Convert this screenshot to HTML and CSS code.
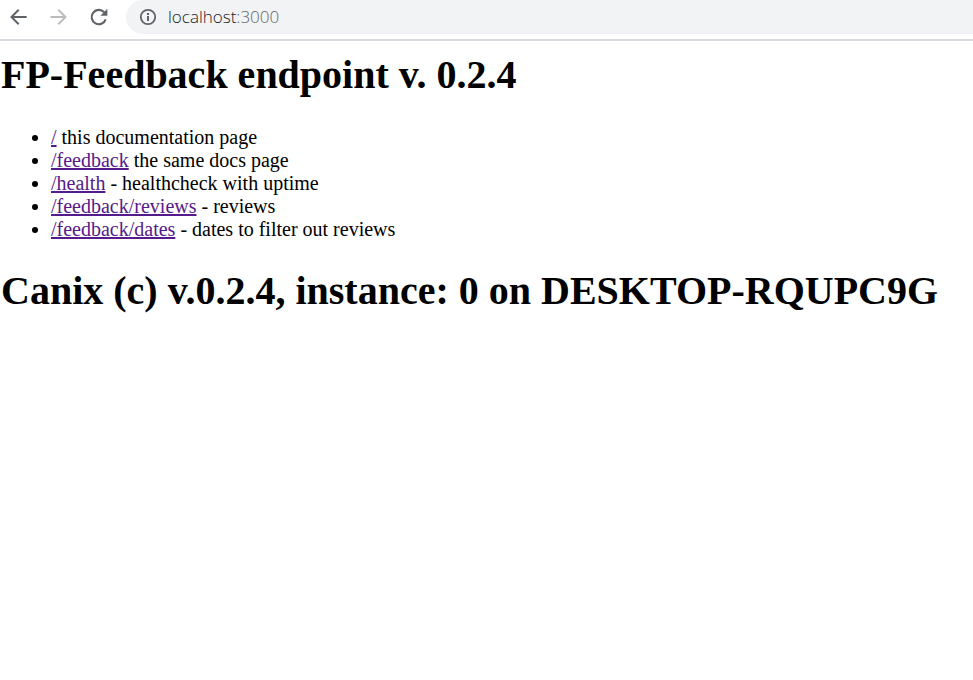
FILE: index.html
```
<!DOCTYPE html>
<html lang="en">
<head>
<meta charset="utf-8">
<title>FP-Feedback endpoint</title>
<link rel="stylesheet" href="styles.css">
</head>
<body>
<header class="toolbar">
  <nav class="tools">
    <button class="tool" type="button" aria-label="Back">
      <svg width="20" height="20" viewBox="0 0 20 20"><path d="M17.7 10H3.2M9.7 2.8L2.5 10L9.7 17.2" fill="none" stroke="#5f6368" stroke-width="2"/></svg>
    </button>
    <button class="tool" type="button" aria-label="Forward">
      <svg width="20" height="20" viewBox="0 0 20 20"><path d="M1.5 10H16.3M9.3 2.8L16.5 10L9.3 17.2" fill="none" stroke="#babcbe" stroke-width="2"/></svg>
    </button>
    <button class="tool" type="button" aria-label="Reload">
      <svg width="20" height="20" viewBox="0 0 20 20"><path d="M15.2 5.2A7.2 7.2 0 1 0 16.7 12.4" fill="none" stroke="#5f6368" stroke-width="2.1"/><path d="M18.4 1.8V8.8H11.4Z" fill="#5f6368"/></svg>
    </button>
  </nav>
  <div class="address">
    <svg width="18" height="18" viewBox="0 0 18 18"><circle cx="9" cy="9" r="7.2" fill="none" stroke="#5f6368" stroke-width="1.8"/><path d="M9 8V13M9 5V7" fill="none" stroke="#5f6368" stroke-width="2"/></svg>
    <span class="url">localhost<span class="port">:3000</span></span>
  </div>
</header>
<main class="page">
  <h1>FP-Feedback endpoint v. 0.2.4</h1>
  <ul>
    <li><a href="#">/</a> this documentation page</li>
    <li><a href="#">/feedback</a> the same docs page</li>
    <li><a href="#">/health</a> - healthcheck with uptime</li>
    <li><a href="#">/feedback/reviews</a> - reviews</li>
    <li><a href="#">/feedback/dates</a> - dates to filter out reviews</li>
  </ul>
  <h1>Canix (c) v.0.2.4, instance: 0 on DESKTOP-RQUPC9G</h1>
</main>
</body>
</html>
```
FILE: styles.css
```
body {
  margin: 0;
  background: #fff;
  color: #000;
  font: 20px/23px "Liberation Serif", "Times New Roman", serif;
}

.toolbar {
  display: flex;
  align-items: flex-start;
  padding-bottom: 5px;
  border-bottom: 2px solid #dadbe1;
}

.tools {
  display: flex;
  gap: 20px;
  padding: 0 17px 0 9px;
}

.tool {
  width: 20px;
  height: 33px;
  padding: 0;
  border: 0;
  background: none;
}

.tool svg,
.address svg {
  display: block;
}

.address {
  flex: 1;
  display: flex;
  align-items: center;
  gap: 11px;
  height: 34px;
  padding-left: 13px;
  border-radius: 17px 0 0 17px;
  background: #f1f3f4;
}

.url {
  color: #202124;
  font: 300 17px/24px "Open Sans", sans-serif;
}

.port {
  color: #5f6368;
}

.page {
  padding: 0 1px;
}

h1 {
  margin: 11px 0 28px;
  font-size: 40px;
  line-height: 46px;
}

ul {
  margin: 0 0 27px;
  padding-left: 50px;
}

a {
  color: #551a8b;
}
```
